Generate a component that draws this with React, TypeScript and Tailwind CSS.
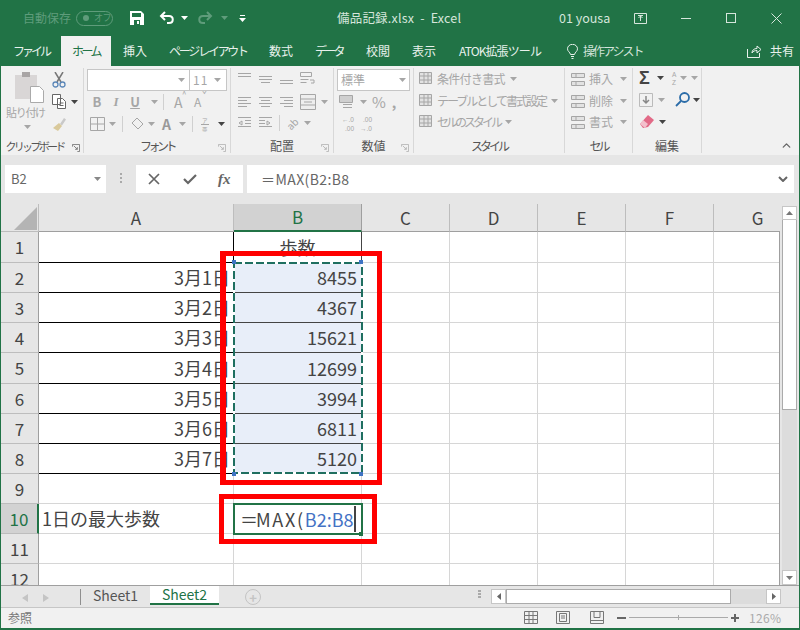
import { ChevronUp } from 'lucide-react';

const jp = '[font-family:"Noto_Sans_CJK_JP","Liberation_Sans",sans-serif]';
const colWidths = [195, 128, 88, 88, 88, 88, 88];

const Caret = ({ className = 'text-[#a6a6a6]' }: { className?: string }) => (
  <svg width="7" height="4" viewBox="0 0 7 4" className={`shrink-0 fill-current ${className}`}>
    <path d="M0 0h7L3.5 4z" />
  </svg>
);

const Launcher = ({ className }: { className: string }) => (
  <svg width="8" height="8" viewBox="0 0 9 9" className={`absolute fill-none ${className}`}>
    <path d="M.5 3V.5H8.500V8.500H6M2 2l4 4M6 3.500V6H3.500" />
  </svg>
);

const GroupLabel = ({ label, launcher, className = '' }: { label: string; launcher?: boolean; className?: string }) => (
  <div className="absolute inset-x-0 bottom-0 h-[14px] flex items-center justify-center text-[12px] text-[#555] whitespace-nowrap">
    <span className={className}>{label}</span>
    {launcher && <Launcher className="right-[4px] top-[5px] stroke-[#b5b5b5]" />}
  </div>
);

function TitleBar() {
  return (
    <div className="h-[36px] flex items-center relative text-[13px] text-[#d6e6dc]">
      <span className="ml-[23px] w-[50px] text-[12px] text-[#5f9c7b] whitespace-nowrap">自動保存</span>
      <div className="ml-[3px] w-[37px] h-[15px] rounded-full border border-[#5f9c7b] flex items-center text-[#5f9c7b] shrink-0">
        <div className="ml-[6px] w-[6px] h-[6px] rounded-full bg-[#5f9c7b]" />
        <span className="ml-[5px] text-[9px] whitespace-nowrap tracking-[-0.5px]">オフ</span>
      </div>
      <svg width="14" height="14" viewBox="0 0 14 14" className="ml-[17px]">
        <path d="M0 0h11l3 3v11H0z" fill="#fff" />
        <path d="M2 2h9v4H2zM4 9h6v5H4z" fill="#217346" />
        <path d="M7 10h2v3H7z" fill="#fff" />
      </svg>
      <svg width="15" height="14" viewBox="0 0 15 14" className="ml-[15px] fill-none stroke-white stroke-[2]">
        <path d="M6 1 2 5l4 4M2 5h8c5 0 5 7 0 7H8" />
      </svg>
      <Caret className="ml-[7px] text-white" />
      <svg width="15" height="14" viewBox="0 0 15 14" className="ml-[10px] fill-none stroke-[#5f9c7b] stroke-[2]">
        <path d="M9 1l4 4-4 4M13 5H5c-5 0-5 7 0 7h2" />
      </svg>
      <Caret className="ml-[8px] text-[#5f9c7b]" />
      <svg width="7" height="7" viewBox="0 0 7 7" className="ml-[11px] fill-white">
        <path d="M1 0h5v1H1zM0 3h7L3.5 7z" />
      </svg>
      <span className="absolute left-[337px] text-[12.5px] whitespace-pre tracking-[0.2px]">備品記録.xlsx  -  Excel</span>
      <span className="absolute left-[559px] text-[12.5px]">01 yousa</span>
      <svg width="13" height="11" viewBox="0 0 13 11" className="absolute left-[634px] fill-none stroke-[#d6e6dc]">
        <path d="M.5.5h12v10H.5zM4 2.500h5M6.500 8V3M4.500 5l2-2 2 2" />
      </svg>
      <div className="absolute left-[681px] w-[10px] h-px bg-[#d6e6dc]" />
      <div className="absolute left-[726px] w-[10px] h-[10px] border border-[#d6e6dc]" />
      <svg width="11" height="11" viewBox="0 0 11 11" className="absolute left-[771px] stroke-[#d6e6dc]">
        <path d="M.5.5l10 10M10.500.5l-10 10" />
      </svg>
    </div>
  );
}

function TabRow() {
  return (
    <div className="h-[30px] flex items-center text-[12px] text-[#e8f1ec] relative whitespace-nowrap">
      <span className="ml-[13px] w-[34px] tracking-[-3px]">ファイル</span>
      <div className="ml-[14px] w-[50px] h-full bg-[#f1f1f1] text-[#217346] flex items-center justify-center tracking-[-2.5px]">ホーム</div>
      <span className="ml-[12px] w-[24px]">挿入</span>
      <span className="ml-[22px] w-[77px] tracking-[-2.3px]">ページ レイアウト</span>
      <span className="ml-[23px] w-[24px]">数式</span>
      <span className="ml-[22px] w-[28px] tracking-[-2.7px]">データ</span>
      <span className="ml-[23px] w-[24px]">校閲</span>
      <span className="ml-[22px] w-[24px]">表示</span>
      <span className="ml-[23px] w-[83px] tracking-[-0.9px]">ATOK拡張ツール</span>
      <svg width="11" height="15" viewBox="0 0 11 15" className="ml-[25px] fill-none stroke-[#e8f1ec] shrink-0">
        <path d="M3.500 10.500C3 8 .5 7.500.5 4.800a5 4.500 0 0 1 10 0C10.500 7.500 8 8 7.500 10.500zM4 12.500h3M4.500 14.500h2" />
      </svg>
      <span className="ml-[5px] tracking-[-2px] text-[#d3e3da]">操作アシスト</span>
      <svg width="15" height="14" viewBox="0 0 15 14" className="absolute left-[747px] fill-none stroke-[#e8f1ec]">
        <path d="M.5 5v8.500h12V9M5 9c0-3 2-4.500 5-4.500V2l4 3.500-4 3.500V6.500c-2 0-4 .5-5 2.500z" />
      </svg>
      <span className="absolute left-[770px]">共有</span>
    </div>
  );
}

function Clipboard() {
  return (
    <div className="relative w-[82px] border-r border-[#d8d8d8] my-[2px]">
      <svg width="29" height="31" viewBox="0 0 29 31" className="absolute left-[13px] top-[4px]">
        <path d="M0 3h22v24H0z" fill="#d9d6d6" />
        <path d="M7 0h8v5H7z" fill="#a9a5a5" />
        <path d="M15.500 14.500h9l4 4v12h-13z" fill="#fff" stroke="#aaa" />
      </svg>
      <span className="absolute left-[4px] top-[36px] text-[11px] text-[#a6a6a6] tracking-[-1.3px] whitespace-nowrap">貼り付け</span>
      <Caret className="absolute left-[22px] top-[57px] text-[#a6a6a6]" />
      <svg width="14" height="16" viewBox="0 0 14 16" className="absolute left-[50px] top-[4px] fill-none">
        <path d="M3 0l6 10M11 0L5 10" stroke="#777" strokeWidth="1.500" />
        <circle cx="3.500" cy="12.500" r="2.500" stroke="#5b87b8" strokeWidth="1.300" />
        <circle cx="10.500" cy="12.500" r="2.500" stroke="#5b87b8" strokeWidth="1.300" />
      </svg>
      <svg width="15" height="15" viewBox="0 0 15 15" className="absolute left-[50px] top-[26px] fill-white stroke-[#666]">
        <path d="M.5.5h8v10h-8zM5.500 4.500h5l3 3v7h-8zM7.500 9h4M7.500 11.500h4" />
      </svg>
      <Caret className="absolute left-[69px] top-[32px] text-[#444]" />
      <svg width="13" height="13" viewBox="0 0 13 13" className="absolute left-[51px] top-[50px]">
        <path d="M7 6l4-6 2 1.500-4 6z" fill="#c9c9c9" />
        <path d="M0 10l6-5 3 3-4 5z" fill="#d9c99b" />
      </svg>
      <GroupLabel label="クリップボード" className="text-[11px] tracking-[-2.7px] mr-[16px]" />
      <Launcher className="left-[70px] bottom-[1px] stroke-[#777]" />
    </div>
  );
}

function Font() {
  return (
    <div className="relative w-[147px] border-r border-[#d8d8d8] my-[2px] text-[#a6a6a6]">
      <div className="absolute left-[3px] top-[1px] w-[140px] h-[22px] bg-white border border-[#c6c6c6] flex items-center">
        <div className="w-[102px] h-full border-r border-[#c6c6c6] flex items-center justify-end pr-[4px]"><Caret /></div>
        <span className="ml-[3px] text-[12px] tracking-[1px]">11</span>
        <Caret className="ml-[6px]" />
      </div>
      <div className="absolute left-[8px] top-[25px] flex items-center h-[18px] text-[13px] whitespace-nowrap">
        <span className="font-bold w-[10px] text-center">B</span>
        <span className="ml-[9px] italic font-bold w-[10px] text-center [font-family:'Liberation_Serif',serif]">I</span>
        <span className="ml-[9px] font-bold w-[10px] text-center underline">U</span>
        <Caret className="ml-[11px]" />
        <div className="ml-[5px] w-px h-[16px] bg-[#d0d0d0]" />
        <span className="ml-[10px] w-[13px] text-[14px] relative">A<span className="absolute left-[8px] -top-[4px] text-[8px]">^</span></span>
        <span className="ml-[7px] w-[13px] text-[12px] relative">A<span className="absolute left-[8px] -top-[4px] text-[8px]">ˇ</span></span>
      </div>
      <div className="absolute left-[6px] top-[47px] flex items-center h-[18px]">
        <svg width="15" height="14" viewBox="0 0 15 14" className="fill-none stroke-[#a6a6a6]">
          <path d="M.5.5h14v13H.5zM7.500 .5v13M.5 7h14" />
        </svg>
        <Caret className="ml-[4px]" />
        <div className="ml-[6px] w-px h-[16px] bg-[#d0d0d0]" />
        <svg width="14" height="14" viewBox="0 0 14 14" className="ml-[8px] fill-none stroke-[#a6a6a6]">
          <path d="M6 1l6 6-5 5-6-6z" />
        </svg>
        <Caret className="ml-[3px]" />
        <span className="ml-[7px] w-[10px] text-[14px] font-semibold text-[#999]">A</span>
        <Caret className="ml-[7px]" />
        <div className="ml-[6px] w-px h-[16px] bg-[#d0d0d0]" />
        <svg width="8" height="15" viewBox="0 0 8 15" className="ml-[8px] fill-[#a6a6a6]">
          <text x="1" y="6" fontSize="5.500">ア</text>
          <path d="M0 7h8v1H0z" />
          <text x="1" y="14.500" fontSize="5.500">亜</text>
        </svg>
        <Caret className="ml-[9px] text-[#444]" />
      </div>
      <GroupLabel label="フォント" launcher className="tracking-[-3.5px]" />
    </div>
  );
}

const Lines = ({ d }: { d: string }) => (
  <svg width="15" height="14" viewBox="0 0 15 14" className="fill-none stroke-[#a6a6a6]">
    <path d={d} />
  </svg>
);

function Alignment() {
  return (
    <div className="relative w-[103px] border-r border-[#d8d8d8] my-[2px] text-[#a6a6a6]">
      <div className="absolute left-[6px] top-[4px] flex gap-[6px]">
        <Lines d="M1 1.500h13M1 4.500h13" />
        <Lines d="M1 4.500h13M1 7.500h13M3 10.500h9" />
        <Lines d="M1 8.500h13M1 11.500h13" />
        <svg width="16" height="15" viewBox="0 0 16 15" className="fill-none stroke-[#a6a6a6]">
          <path d="M.5.5h11v4H.5zM.5 7.500h8M.5 10.500h6M10 8h4v3h-3" />
        </svg>
      </div>
      <div className="absolute left-[6px] top-[26px] flex items-center gap-[6px]">
        <Lines d="M1 2.500h13M1 5.500h9M1 8.500h13M1 11.500h9" />
        <Lines d="M1 2.500h13M3 5.500h9M1 8.500h13M3 11.500h9" />
        <Lines d="M1 2.500h13M5 5.500h9M1 8.500h13M5 11.500h9" />
        <svg width="16" height="16" viewBox="0 0 16 16" className="fill-[#eee] stroke-[#a6a6a6]">
          <path d="M.5.500h15v15H.5zM.5 5h15M.5 11h15M4 8h8" />
        </svg>
        <Caret className="-ml-[1px]" />
      </div>
      <div className="absolute left-[6px] top-[47px] flex items-center gap-[6px]">
        <Lines d="M1 1.500h13M8 4.500h6M8 7.500h6M1 10.500h13M5 5l-3 2 3 2z" />
        <Lines d="M1 1.500h13M1 4.500h6M1 7.500h6M1 10.500h13M9 5l3 2-3 2z" />
        <div className="w-px h-[16px] bg-[#d0d0d0]" />
        <span className="text-[10px] -rotate-45">ab</span>
        <Caret />
      </div>
      <GroupLabel label="配置" launcher />
    </div>
  );
}

function NumberGroup() {
  return (
    <div className="relative w-[80px] border-r border-[#d8d8d8] my-[2px] text-[#a6a6a6]">
      <div className="absolute left-[3px] top-[1px] w-[73px] h-[22px] bg-white border border-[#c6c6c6] flex items-center justify-between px-[3px] text-[12px]">
        標準
        <Caret />
      </div>
      <div className="absolute left-[5px] top-[25px] flex items-center h-[18px]">
        <svg width="16" height="16" viewBox="0 0 16 16" className="fill-[#cfcfcf] stroke-[#a6a6a6]">
          <path d="M.5 1.500h13v7H.5zM4 10.500h9M4 13.500h9" />
        </svg>
        <Caret className="ml-[5px]" />
        <span className="ml-[5px] text-[15px]">%</span>
        <span className="ml-[6px] text-[14px] font-bold">,</span>
      </div>
      <svg width="36" height="17" viewBox="0 0 36 17" className="absolute left-[8px] top-[47px] fill-[#a6a6a6] [font-family:'Liberation_Sans',sans-serif]">
        <text x="0" y="7" fontSize="6.500">←.0</text>
        <text x="3" y="16" fontSize="6.500">.00</text>
        <text x="21" y="7" fontSize="6.500">.00</text>
        <text x="18" y="16" fontSize="6.500">→.0</text>
      </svg>
      <GroupLabel label="数値" launcher />
    </div>
  );
}

const StyleRow = ({ label, top, track }: { label: string; top: string; track: string }) => (
  <div className={`absolute left-[5px] h-[18px] flex items-center text-[12px] text-[#a6a6a6] whitespace-nowrap ${top}`}>
    <svg width="16" height="15" viewBox="0 0 16 15" className="fill-[#e2e2e2] stroke-[#a6a6a6] shrink-0">
      <path d="M.5.5h12v11H.5zM.5 4h12M.5 8h12M5 .5v11M9 .5v11" />
    </svg>
    <span className={`ml-[2px] ${track}`}>{label}</span>
    <Caret className="ml-[5px]" />
  </div>
);

function Styles() {
  return (
    <div className="relative w-[151px] border-r border-[#d8d8d8] my-[2px]">
      <StyleRow label="条件付き書式" top="top-[2px]" track="tracking-[-0.7px]" />
      <StyleRow label="テーブルとして書式設定" top="top-[24px]" track="tracking-[-2px]" />
      <StyleRow label="セルのスタイル" top="top-[45px]" track="tracking-[-3px]" />
      <GroupLabel label="スタイル" className="tracking-[-3px]" />
    </div>
  );
}

function Cells() {
  return (
    <div className="relative w-[68px] border-r border-[#d8d8d8] my-[2px] text-[12px] text-[#a6a6a6]">
      {[['挿入', 'top-[2px]'], ['削除', 'top-[24px]'], ['書式', 'top-[45px]']].map(([label, top]) => (
        <div key={label} className={`absolute left-[6px] h-[18px] flex items-center ${top}`}>
          <svg width="14" height="15" viewBox="0 0 14 15" className="fill-[#e2e2e2] stroke-[#a6a6a6]">
            <path d="M.5 1.500h13v4H.5zM.5 9.500h13v4H.5zM5 1.500v4M5 9.500v4" />
          </svg>
          <span className="ml-[4px]">{label}</span>
          <Caret className="ml-[7px]" />
        </div>
      ))}
      <GroupLabel label="セル" className="tracking-[-3px]" />
    </div>
  );
}

function Editing() {
  return (
    <div className="relative w-[69px] border-r border-[#d8d8d8] my-[2px] text-[#a6a6a6]">
      <div className="absolute left-[6px] top-[1px] h-[18px] flex items-center">
        <span className="w-[13px] text-[18px] leading-[18px] font-bold text-[#444] [font-family:'Liberation_Sans',sans-serif]">Σ</span>
        <Caret className="ml-[5px] text-[#444]" />
        <svg width="8" height="16" viewBox="0 0 8 16" className="ml-[7px] fill-[#a6a6a6] [font-family:'Liberation_Sans',sans-serif]">
          <text x="1" y="7" fontSize="6.500">A</text>
          <text x="1" y="15" fontSize="6.500">Z</text>
        </svg>
        <Caret className="ml-[1px]" />
        <Caret className="ml-[4px]" />
      </div>
      <div className="absolute left-[6px] top-[24px] flex items-center">
        <svg width="14" height="14" viewBox="0 0 14 14" className="fill-none stroke-[#888]">
          <path d="M.5.5h13v13H.5z" stroke="#bbb" />
          <path d="M7 3v7M4 7l3 3 3-3" strokeWidth="1.500" />
        </svg>
        <Caret className="ml-[5px]" />
        <svg width="15" height="15" viewBox="0 0 15 15" className="ml-[10px] fill-none stroke-[#2b6ca8] stroke-[1.800]">
          <circle cx="9.500" cy="5.500" r="4.500" />
          <path d="M6 9l-5 5" />
        </svg>
        <Caret className="ml-[3px] text-[#444]" />
      </div>
      <div className="absolute left-[7px] top-[47px] flex items-center">
        <svg width="14" height="13" viewBox="0 0 14 13">
          <path d="M8 0l6 5-6 7-5 1-3-4z" fill="#e26a87" />
          <path d="M0 9l3-4 5 4-3 4z" fill="#f3c0cc" />
        </svg>
        <Caret className="ml-[5px] text-[#444]" />
      </div>
      <GroupLabel label="編集" />
    </div>
  );
}

function Ribbon() {
  return (
    <div className="h-[89px] bg-[#f1f1f1] flex pl-px relative">
      <Clipboard />
      <Font />
      <Alignment />
      <NumberGroup />
      <Styles />
      <Cells />
      <Editing />
      <ChevronUp size={13} strokeWidth={2.500} className="absolute left-[779px] top-[73px] text-[#666]" />
    </div>
  );
}

function FormulaBar() {
  return (
    <div className="h-[49px] bg-[#e6e6e6] flex pt-[10px] pl-[4px] text-[#666]">
      <div className="w-[101px] h-[28px] bg-white flex items-center justify-between pl-[6px] pr-[5px] text-[13px]">
        B2
        <Caret className="text-[#888]" />
      </div>
      <div className="ml-[14px] flex flex-col gap-[2px] pt-[8px] h-[28px]">
        <div className="w-[2px] h-[2px] bg-[#aaa]" />
        <div className="w-[2px] h-[2px] bg-[#aaa]" />
        <div className="w-[2px] h-[2px] bg-[#aaa]" />
      </div>
      <div className="ml-[14px] w-[107px] h-[28px] bg-white flex items-center">
        <svg width="12" height="12" viewBox="0 0 12 12" className="ml-[12px] stroke-[#666] stroke-[1.700]">
          <path d="M1 1l10 10M11 1L1 11" />
        </svg>
        <svg width="14" height="11" viewBox="0 0 14 11" className="ml-[23px] fill-none stroke-[#666] stroke-[2.200]">
          <path d="M1 5l4 4 8-8" />
        </svg>
        <span className="ml-[21px] text-[15px] italic font-bold [font-family:'Liberation_Serif',serif]">fx</span>
      </div>
      <div className="ml-[4px] w-[547px] h-[28px] bg-white flex items-center text-[14px] pl-[14px] relative tracking-[0.4px]">
        ＝MAX(B2:B8
        <svg width="10" height="6" viewBox="0 0 10 6" className="absolute right-[6px] top-[11px] fill-none stroke-[#666] stroke-[2]">
          <path d="M1 1l4 4 4-4" />
        </svg>
      </div>
    </div>
  );
}

const ColumnHeader = () => (
  <div className="flex h-[28px] shrink-0">
    <div className="w-[38px] shrink-0 bg-[#e6e6e6] border-r border-b border-[#bdbdbd] relative">
      <svg width="23" height="23" viewBox="0 0 23 23" className="absolute left-[13px] top-[3px] fill-[#b4b4b4]">
        <path d="M23 0v23H0z" />
      </svg>
    </div>
    {['A', 'B', 'C', 'D', 'E', 'F', 'G'].map((col, i) => (
      <div
        key={col}
        style={{ width: colWidths[i] }}
        className={
          col === 'B'
            ? 'shrink-0 flex items-center justify-center text-[17px] bg-[#d2d2d2] text-[#217346] border-r border-[#9f9f9f] border-b-2 border-b-[#217346]'
            : 'shrink-0 flex items-center justify-center text-[17px] bg-[#e6e6e6] text-[#444] border-r border-[#bdbdbd] border-b border-b-[#9f9f9f]'
        }
      >
        {col}
      </div>
    ))}
  </div>
);

const rows: { a?: string; b?: string }[] = [
  { b: '歩数' },
  { a: '3月1日', b: '8455' },
  { a: '3月2日', b: '4367' },
  { a: '3月3日', b: '15621' },
  { a: '3月4日', b: '12699' },
  { a: '3月5日', b: '3994' },
  { a: '3月6日', b: '6811' },
  { a: '3月7日', b: '5120' },
  {},
  { a: '1日の最大歩数' },
  {},
  {},
];

function Grid() {
  return (
    <div className="flex-1 relative bg-white overflow-hidden min-h-0">
      {rows.map((row, i) => {
        const n = i + 1;
        const inTable = n >= 2 && n <= 8;
        return (
          <div key={n} className={n === 1 || n === 5 ? 'flex h-[31px]' : 'flex h-[30px]'}>
            <div
              className={
                n === 10
                  ? 'w-[38px] shrink-0 bg-[#d2d2d2] text-[#217346] border-r-2 border-[#217346] border-b border-b-[#bdbdbd] flex items-center justify-center text-[17px]'
                  : 'w-[38px] shrink-0 bg-[#e6e6e6] text-[#444] border-r border-[#9f9f9f] border-b border-b-[#bdbdbd] flex items-center justify-center text-[17px]'
              }
            >
              {n}
            </div>
            <div
              className={`w-[195px] shrink-0 flex items-center text-[18px] text-[#444] border-r border-b ${
                inTable
                  ? 'justify-end pr-[3px] border-black'
                  : n === 1
                    ? 'border-black'
                    : 'pl-[3px] border-[#d6d6d6]'
              }`}
            >
              {row.a}
            </div>
            <div
              className={`w-[128px] shrink-0 flex items-center text-[18px] text-[#444] border-r border-b ${
                n === 1 ? 'justify-center' : 'justify-end pr-[4px]'
              } ${inTable ? 'bg-[#e8eef9]' : ''} ${n === 1 || inTable ? 'border-[#444]' : 'border-[#d6d6d6]'}`}
            >
              {row.b}
            </div>
            {colWidths.slice(2).map((w, j) => (
              <div key={j} style={{ width: w }} className="shrink-0 border-r border-b border-[#d6d6d6]" />
            ))}
          </div>
        );
      })}

      {/* copy marquee over B2:B8 */}
      <svg width="130" height="212" viewBox="0 0 130 212" className="absolute left-[232px] top-[30px] fill-none">
        <rect x="1" y="1" width="128" height="210" stroke="#fff" strokeWidth="2" />
        <rect x="1" y="1" width="128" height="210" stroke="#1f6f60" strokeWidth="2" strokeDasharray="8 3" />
      </svg>
      <div className="absolute left-[231px] top-[28px] w-[4px] h-[4px] bg-[#3f74c4]" />
      <div className="absolute left-[358px] top-[28px] w-[4px] h-[4px] bg-[#3f74c4]" />
      <div className="absolute left-[231px] top-[240px] w-[4px] h-[4px] bg-[#3f74c4]" />
      <div className="absolute left-[358px] top-[240px] w-[4px] h-[4px] bg-[#3f74c4]" />

      {/* cell being edited */}
      <div className="absolute left-[232px] top-[271px] w-[130px] h-[32px] border-2 border-[#217346] bg-white flex items-center pl-[5px] text-[18px] text-[#444] whitespace-nowrap">
        <span className="tracking-[-2px]">＝</span>
        <span className="tracking-[1.700px]">MAX(</span>
        <span className="text-[#4472c4]">B2:B8</span>
        <div className="ml-[1px] w-[2px] h-[26px] bg-[#444]" />
      </div>
      <div className="absolute left-[358px] top-[300px] w-[4px] h-[4px] bg-[#217346]" />

      {/* red annotation frames */}
      <div className="absolute left-[219px] top-[19px] w-[162px] h-[234px] border-[5px] border-l-[6px] border-[#ff0000]" />
      <div className="absolute left-[218px] top-[262px] w-[158px] h-[50px] border-[5px] border-[#ff0000]" />
    </div>
  );
}

function Scrollbar() {
  return (
    <div className="w-[19px] shrink-0 bg-[#e6e6e6] flex flex-col pt-[2px] pl-[2px] pr-[2px]">
      <div className="h-[14px] bg-white border border-[#c6c6c6] flex items-center justify-center">
        <Caret className="rotate-180 text-[#777]" />
      </div>
      <div className="h-[190px] bg-white border-x border-b border-[#ababab]" />
      <div className="flex-1 bg-[#dcdcdc]" />
      <div className="h-[15px] bg-white border border-[#c6c6c6] flex items-center justify-center">
        <Caret className="text-[#777]" />
      </div>
    </div>
  );
}

function SheetTabs() {
  return (
    <div className="h-[22px] shrink-0 bg-[#e6e6e6] border-t border-[#9f9f9f] flex items-start relative text-[14px]">
      <svg width="6" height="8" viewBox="0 0 6 8" className="ml-[21px] mt-[8px] fill-[#c4c4c4]">
        <path d="M6 0v8L0 4z" />
      </svg>
      <svg width="6" height="8" viewBox="0 0 6 8" className="ml-[15px] mt-[8px] fill-[#c4c4c4]">
        <path d="M0 0v8l6-4z" />
      </svg>
      <div className="ml-[31px] mt-[3px] w-px h-[16px] bg-[#8f8f8f]" />
      <div className="w-[69px] h-[19px] flex items-center justify-center text-[#555]">Sheet1</div>
      <div className="w-[69px] h-[19px] bg-white border-b-2 border-[#217346] text-[#217346] flex items-center justify-center">Sheet2</div>
      <div className="ml-[26px] mt-[3px] w-[16px] h-[16px] rounded-full border border-[#c4c4c4] flex items-center justify-center text-[#c4c4c4] text-[13px] leading-none font-bold">+</div>
      <div className="absolute left-[477px] top-[4px] flex flex-col gap-[1px]">
        <div className="w-[3px] h-[2px] bg-[#aaa]" />
        <div className="w-[3px] h-[2px] bg-[#aaa]" />
        <div className="w-[3px] h-[2px] bg-[#aaa]" />
      </div>
      <div className="absolute left-[490px] top-[3px] w-[290px] h-[15px] bg-[#dcdcdc] flex">
        <div className="w-[15px] bg-white border border-[#c6c6c6] flex items-center justify-center">
          <svg width="4" height="7" viewBox="0 0 4 7" className="fill-[#666]"><path d="M4 0v7L0 3.500z" /></svg>
        </div>
        <div className="w-[225px] bg-white border border-[#ababab]" />
        <div className="flex-1" />
        <div className="w-[15px] bg-white border border-[#c6c6c6] flex items-center justify-center">
          <svg width="4" height="7" viewBox="0 0 4 7" className="fill-[#666]"><path d="M0 0v7l4-3.500z" /></svg>
        </div>
      </div>
    </div>
  );
}

function StatusBar() {
  return (
    <div className="h-[21px] shrink-0 bg-[#f1f1f1] border-t border-[#c6c6c6] flex items-center relative text-[#777]">
      <span className="ml-[7px] text-[12px]">参照</span>
      <svg width="14" height="13" viewBox="0 0 14 13" className="absolute left-[523px] top-[3px] fill-none stroke-[#777]">
        <path d="M.5.5h13v12H.5zM5 .5v12M9 .5v12M.5 4.500h13M.5 8.500h13" />
      </svg>
      <svg width="14" height="13" viewBox="0 0 14 13" className="absolute left-[555px] top-[3px] fill-none stroke-[#777]">
        <path d="M.5.5h13v12H.5zM3.500 2.500h7v8h-7zM5 5h4M5 7h4" />
      </svg>
      <svg width="14" height="13" viewBox="0 0 14 13" className="absolute left-[589px] top-[3px] fill-none stroke-[#777]">
        <path d="M.5.5h13v12H.5zM.5 9.500h13M4 .5v6h6v-6" />
      </svg>
      <div className="absolute left-[616px] top-[9px] w-[9px] h-[2px] bg-[#666]" />
      <div className="absolute left-[628px] top-[9px] w-[99px] h-px bg-[#aaa]" />
      <div className="absolute left-[677px] top-[7px] w-px h-[5px] bg-[#aaa]" />
      <div className="absolute left-[730px] top-[9px] w-[8px] h-[2px] bg-[#666]" />
      <div className="absolute left-[733px] top-[6px] w-[2px] h-[8px] bg-[#666]" />
      <span className="absolute left-[748px] text-[12px] text-[#aaa] tracking-[0.3px]">126%</span>
    </div>
  );
}

export default function App() {
  return (
    <div className={`w-[800px] h-[630px] overflow-hidden bg-[#217346] flex flex-col pb-[2px] ${jp}`}>
      <TitleBar />
      <TabRow />
      <div className="flex-1 flex flex-col ml-px mr-px bg-[#e6e6e6] min-h-0">
        <Ribbon />
        <FormulaBar />
        <div className="flex-1 flex min-h-0">
          <div className="flex-1 flex flex-col min-w-0 overflow-hidden">
            <ColumnHeader />
            <div className="flex-1 flex min-h-0 border-r border-[#9f9f9f]">
              <Grid />
            </div>
          </div>
          <Scrollbar />
        </div>
        <SheetTabs />
        <StatusBar />
      </div>
    </div>
  );
}
